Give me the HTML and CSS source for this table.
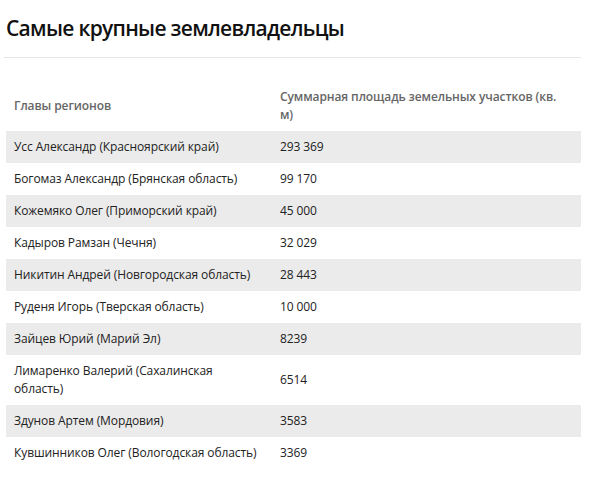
FILE: index.html
```html
<!DOCTYPE html>
<html lang="ru">
<head>
<meta charset="utf-8">
<title>Самые крупные землевладельцы</title>
<link rel="stylesheet" href="styles.css">
</head>
<body>
<div class="page">
  <h1 class="title">Самые крупные землевладельцы</h1>
  <hr class="rule">
  <table class="data">
    <colgroup><col class="c1"><col class="c2"></colgroup>
    <thead>
      <tr><th>Главы регионов</th><th class="wrap">Суммарная площадь земельных участков (кв. м)</th></tr>
    </thead>
    <tbody>
      <tr><td>Усс Александр (Красноярский край)</td><td>293 369</td></tr>
      <tr><td>Богомаз Александр (Брянская область)</td><td>99 170</td></tr>
      <tr><td>Кожемяко Олег (Приморский край)</td><td>45 000</td></tr>
      <tr><td>Кадыров Рамзан (Чечня)</td><td>32 029</td></tr>
      <tr><td>Никитин Андрей (Новгородская область)</td><td>28 443</td></tr>
      <tr><td>Руденя Игорь (Тверская область)</td><td>10 000</td></tr>
      <tr><td>Зайцев Юрий (Марий Эл)</td><td>8239</td></tr>
      <tr><td>Лимаренко Валерий (Сахалинская область)</td><td>6514</td></tr>
      <tr><td>Здунов Артем (Мордовия)</td><td>3583</td></tr>
      <tr><td>Кувшинников Олег (Вологодская область)</td><td>3369</td></tr>
    </tbody>
  </table>
</div>
</body>
</html>
```
FILE: styles.css
```css
html, body { margin: 0; padding: 0; background: #fff; }
body { font-family: "Open Sans", "Liberation Sans", sans-serif; color: #222; }
.page { padding: 0 22px 0 6px; }
.title {
  margin: 0;
  padding-top: 14px;
  font-size: 21px;
  line-height: 28px;
  font-weight: 600;
  color: #111;
  letter-spacing: -0.7px;
}
.rule {
  margin: 15px 0 0 -2px;
  border: 0;
  border-top: 1px solid #e6e6e6;
  height: 0;
}
.data {
  margin-top: 23px;
  width: 575px;
  border-collapse: collapse;
  table-layout: fixed;
  font-size: 12px;
  line-height: 18px;
  letter-spacing: -0.1px;
}
.c1 { width: 266px; }
.c2 { width: 309px; }
.data th, .data td {
  padding: 7px 8px;
  text-align: left;
  vertical-align: middle;
}
.data th { font-weight: 600; color: #666; letter-spacing: -0.1px; }
.data th.wrap { padding-right: 24px; }
.data td { color: #222; }
.data tbody tr:nth-child(odd) { background: #ebebeb; }
```
